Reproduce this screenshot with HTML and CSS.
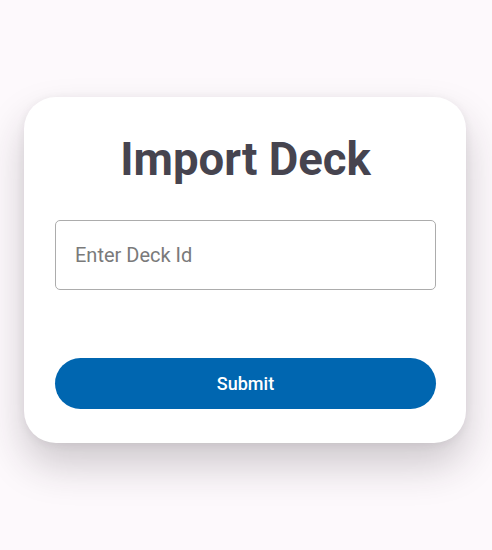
FILE: index.html
```html
<!DOCTYPE html>
<html>
<head>
<meta charset="utf-8">
<link rel="stylesheet" href="styles.css">
</head>
<body>
<div class="page">
  <div class="card">
    <h1 class="title">Import Deck</h1>
    <div class="field">
      <input class="input" type="text" placeholder="Enter Deck Id">
    </div>
    <button class="submit" type="button">Submit</button>
  </div>
</div>
</body>
</html>
```

FILE: styles.css
```css
html, body {
  margin: 0;
  padding: 0;
  background: #fdf9fc;
  font-family: Roboto, "Noto Sans", sans-serif;
}
.page {
  width: 492px;
  height: 550px;
  padding: 97px 26px 0 24px;
  box-sizing: border-box;
}
.card {
  background: #ffffff;
  border-radius: 32px;
  box-shadow: 0 22px 40px rgba(40, 30, 40, 0.22), 0 2px 10px rgba(40, 30, 40, 0.07);
  padding: 36px 30px 34px 31px;
  display: flex;
  flex-direction: column;
}
.title {
  margin: 0;
  font-size: 45.5px;
  font-weight: 700;
  line-height: 54px;
  color: #46444f;
  text-align: center;
}
.field {
  margin-top: 33px;
}
.input {
  display: block;
  width: 100%;
  height: 70px;
  box-sizing: border-box;
  border: 1px solid #acacac;
  border-radius: 5px;
  padding: 0 19px;
  font-family: Roboto, sans-serif;
  font-size: 20px;
  color: #333;
  background: #fff;
  outline: none;
}
.input::placeholder {
  color: #7a7a7a;
}
.submit {
  margin-top: 68px;
  height: 51px;
  border: none;
  border-radius: 26px;
  background: #0066b0;
  color: #ffffff;
  font-family: Roboto, sans-serif;
  font-size: 18px;
  font-weight: 500;
  cursor: pointer;
}
```
